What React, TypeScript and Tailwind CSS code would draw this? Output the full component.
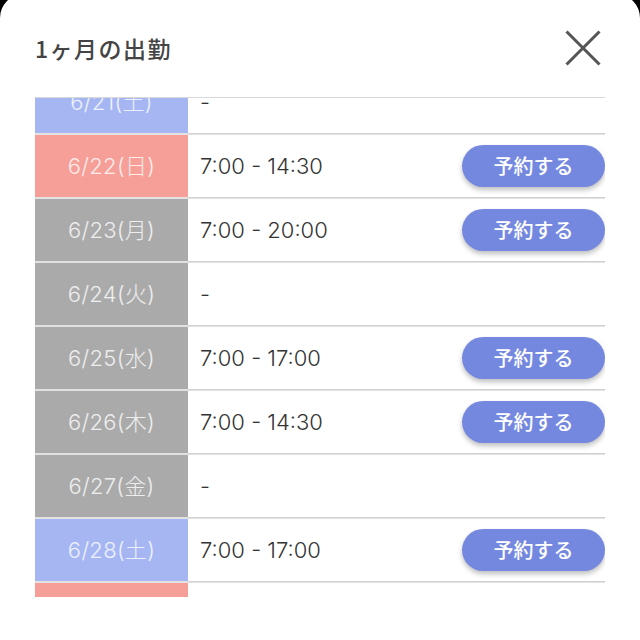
import React from "react";

type Row = { date: string; kind: "sat" | "sun" | "week"; time: string; btn: boolean };

const rows: Row[] = [
  { date: "6/21(土)", kind: "sat", time: "-", btn: false },
  { date: "6/22(日)", kind: "sun", time: "7:00 - 14:30", btn: true },
  { date: "6/23(月)", kind: "week", time: "7:00 - 20:00", btn: true },
  { date: "6/24(火)", kind: "week", time: "-", btn: false },
  { date: "6/25(水)", kind: "week", time: "7:00 - 17:00", btn: true },
  { date: "6/26(木)", kind: "week", time: "7:00 - 14:30", btn: true },
  { date: "6/27(金)", kind: "week", time: "-", btn: false },
  { date: "6/28(土)", kind: "sat", time: "7:00 - 17:00", btn: true },
  { date: "6/29(日)", kind: "sun", time: "-", btn: false },
];

const bg: Record<Row["kind"], string> = {
  sat: "bg-[#a5b6f2]",
  sun: "bg-[#f59f98]",
  week: "bg-[#aaaaaa]",
};

const latin = { fontFamily: 'Inter, "Noto Sans CJK JP", sans-serif' };

export default function App() {
  return (
    <div
      className="h-[640px] bg-black overflow-hidden"
      style={{ fontFamily: '"Noto Sans CJK JP", "Noto Sans", sans-serif' }}
    >
      <div className="-mt-[6px] h-[646px] bg-white rounded-t-[24px] pt-[24px] px-[35px]">
        <div className="h-[60px] flex items-center justify-between">
          <div className="text-[23px] font-medium text-[#444] tracking-[1.5px]">1ヶ月の出勤</div>
          <svg width="36" height="36" viewBox="0 0 36 36" className="mr-[4px]">
            <path d="M1.5 1.5 L34.5 34.5 M34.5 1.5 L1.5 34.5" stroke="#555" strokeWidth="3" />
          </svg>
        </div>
        <div className="mt-[19px] h-[500px] overflow-hidden border-t border-[#d8d8d8]">
          <div className="-mt-[27px]">
            {rows.map((r) => (
              <div key={r.date} className="flex h-[64px] border-b-[2px] border-[#e2e2e2]">
                <div
                  className={`w-[153px] shrink-0 flex items-center justify-center text-[22px] font-light tracking-[0.3px] text-white/80 ${bg[r.kind]}`}
                  style={latin}
                >
                  {r.date}
                </div>
                <div className="flex-1 flex items-center justify-between pl-[12px] border-b border-[#d0d0d0] -mb-[1px]">
                  <span className="text-[22px] font-light text-[#333]" style={latin}>
                    {r.time}
                  </span>
                  {r.btn && (
                    <button className="w-[143px] h-[42px] rounded-full bg-[#7588e0] text-white text-[20px] font-medium shadow-[0_3px_5px_rgba(0,0,0,0.25)]">
                      予約する
                    </button>
                  )}
                </div>
              </div>
            ))}
          </div>
        </div>
      </div>
    </div>
  );
}
